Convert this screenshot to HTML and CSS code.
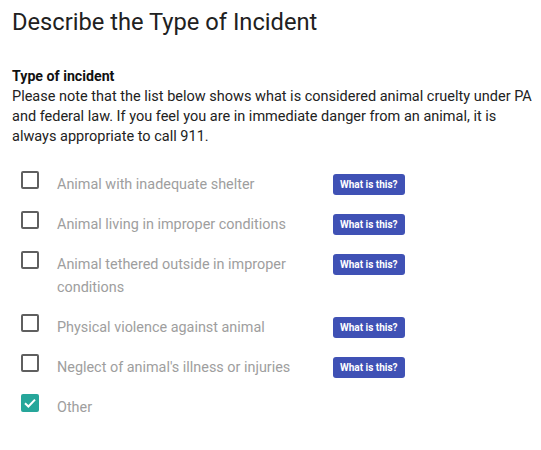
FILE: index.html
```html
<!DOCTYPE html>
<html>
<head>
<meta charset="utf-8">
<link rel="stylesheet" href="styles.css">
</head>
<body>
<div class="page">
  <h1 class="title">Describe the Type of Incident</h1>
  <div class="field-label">Type of incident</div>
  <p class="note">Please note that the list below shows what is considered animal cruelty under PA and federal law. If you feel you are in immediate danger from an animal, it is always appropriate to call 911.</p>
  <ul class="options">
    <li class="option"><span class="box"></span><span class="label">Animal with inadequate shelter</span><span class="help">What is this?</span></li>
    <li class="option"><span class="box"></span><span class="label">Animal living in improper conditions</span><span class="help">What is this?</span></li>
    <li class="option"><span class="box"></span><span class="label">Animal tethered outside in improper conditions</span><span class="help">What is this?</span></li>
    <li class="option"><span class="box"></span><span class="label">Physical violence against animal</span><span class="help">What is this?</span></li>
    <li class="option"><span class="box"></span><span class="label">Neglect of animal's illness or injuries</span><span class="help">What is this?</span></li>
    <li class="option"><span class="box checked"><svg viewBox="0 0 18 18" width="18" height="18"><path d="M4 9.2 L7.4 12.5 L14 5.6" fill="none" stroke="#fff" stroke-width="2"/></svg></span><span class="label">Other</span></li>
  </ul>
</div>
</body>
</html>
```
FILE: styles.css
```css
html, body {
  margin: 0;
  padding: 0;
  background: #fff;
}
.page {
  padding: 8px 0 0 12px;
  font-family: Roboto, "Liberation Sans", sans-serif;
  color: #212121;
}
.title {
  margin: 0;
  font-size: 23.7px;
  font-weight: 400;
  line-height: 28px;
  color: #212121;
}
.field-label {
  margin-top: 31px;
  font-size: 14.2px;
  font-weight: 700;
  line-height: 18px;
  color: #111;
}
.note {
  margin: 2px 0 0 0;
  font-size: 14.5px;
  line-height: 20px;
  color: #222;
}
.options {
  list-style: none;
  margin: 24px 0 0 0;
  padding: 0 0 0 9px;
  display: flex;
  flex-direction: column;
  gap: 15px;
}
.option {
  display: grid;
  grid-template-columns: 18px 258px auto;
  column-gap: 18px;
  align-items: start;
}
.box {
  width: 14px;
  height: 14px;
  border: 2px solid #5f5f5f;
  border-radius: 2px;
}
.box.checked {
  width: 18px;
  height: 18px;
  border: none;
  background: #26a69a;
}
.box svg { display: block; }
.label {
  padding-top: 2px;
  font-size: 14.4px;
  line-height: 23px;
  color: #9e9e9e;
}
.help {
  justify-self: start;
  margin-top: 3px;
  background: #3f51b5;
  color: #fff;
  font-size: 10px;
  font-weight: 700;
  line-height: 21px;
  padding: 0 7px;
  border-radius: 3px;
  white-space: nowrap;
}
```
